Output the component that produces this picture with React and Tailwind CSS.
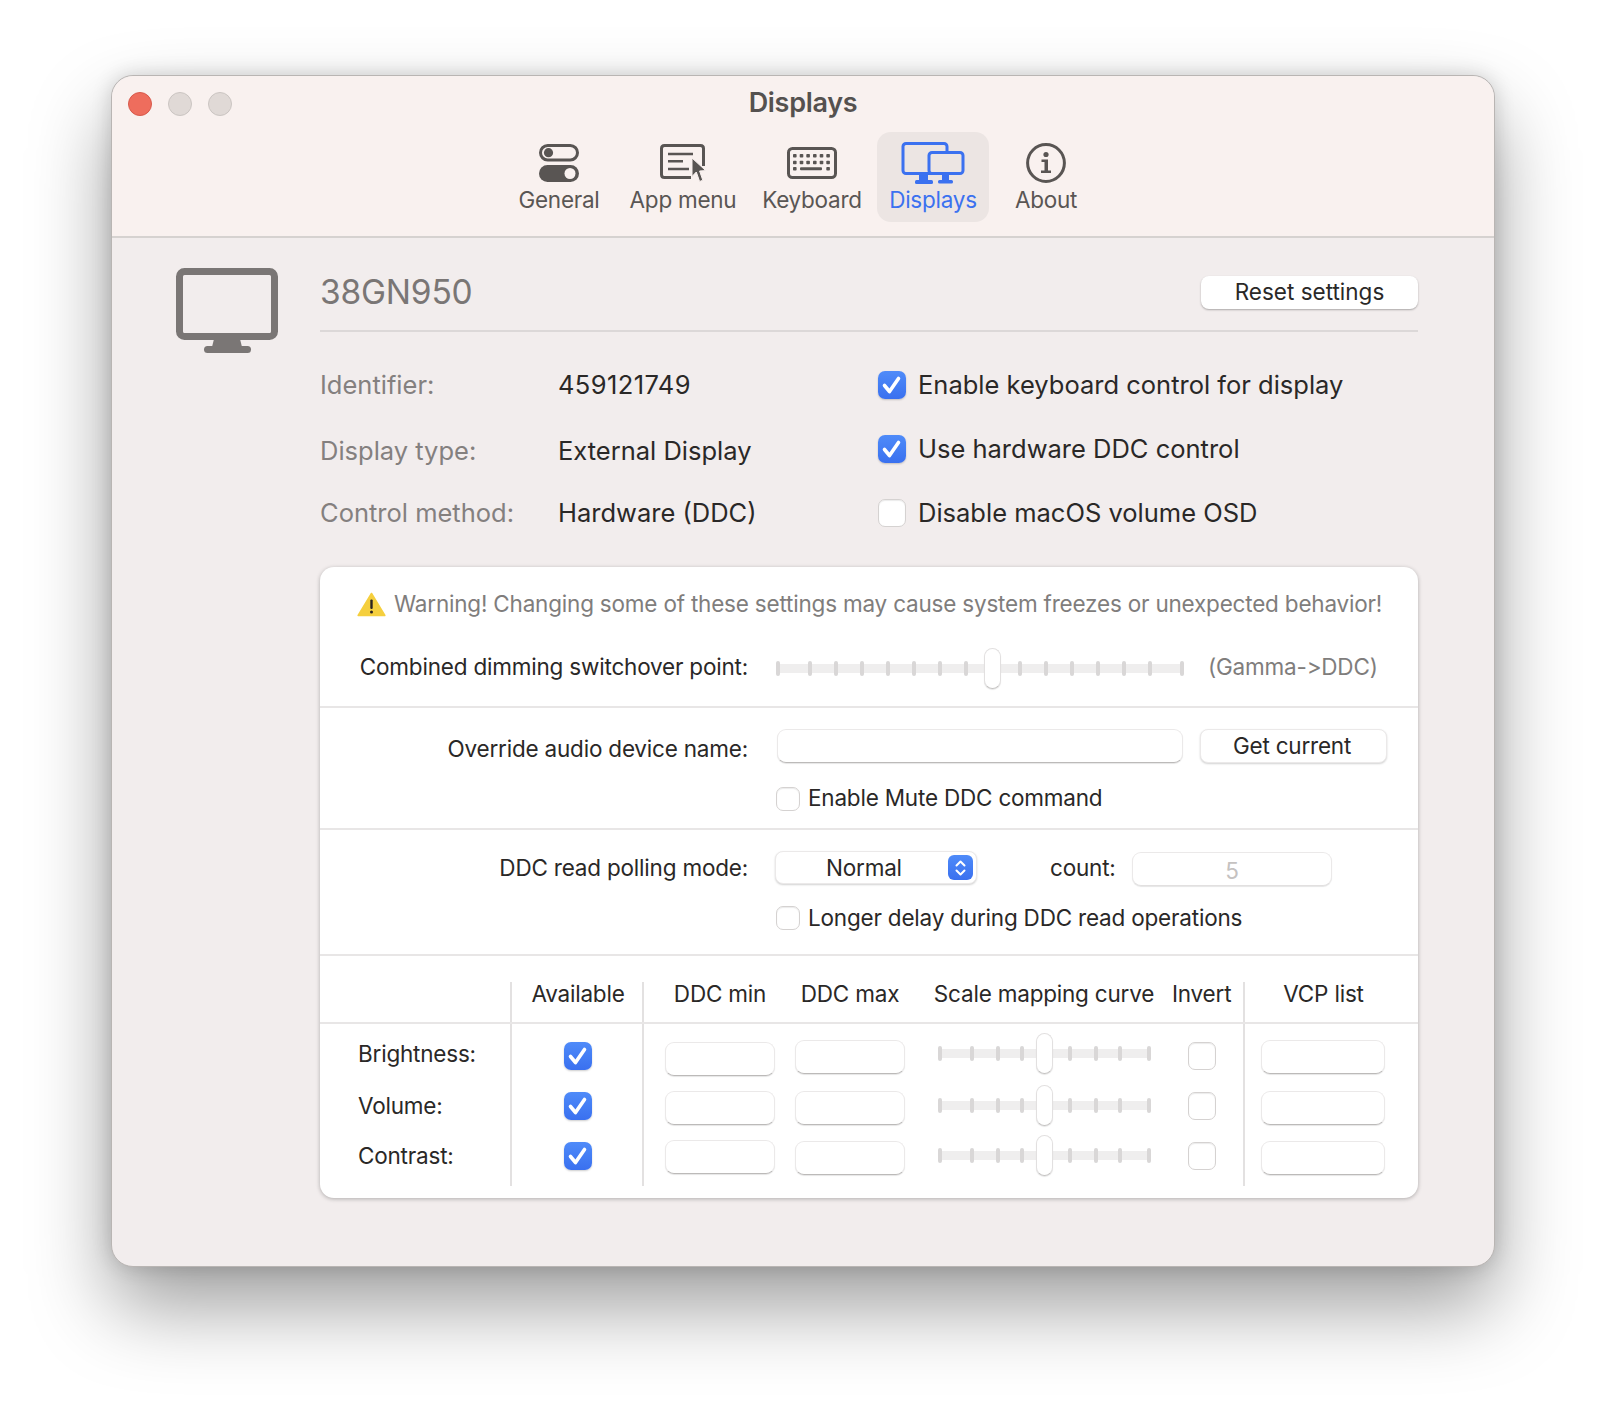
import React from "react";

const mainTicks = [0, 32, 58, 84, 110, 136, 162, 188, 242, 268, 294, 320, 346, 372, 404];
const smallTicks = [0, 32, 58, 82, 130, 156, 180, 209];

function Check({ on, size = "w-[28px] h-[28px]" }) {
  if (!on) {
    return <div className={`${size} shrink-0 rounded-[7px] bg-white border border-[#d5d2d1] shadow-[inset_0_1px_1px_rgba(0,0,0,0.08)]`} />;
  }
  return (
    <div className={`${size} shrink-0 rounded-[7px] bg-gradient-to-b from-[#4f8bf9] to-[#3a70ef] flex items-center justify-center shadow-[0_1px_2px_rgba(0,0,0,0.2)]`}>
      <svg viewBox="0 0 28 28" className="w-full h-full">
        <path d="M6.5 14.5 L11.5 20.5 L20.5 7.5" fill="none" stroke="white" strokeWidth="3.6" strokeLinecap="round" strokeLinejoin="round" />
      </svg>
    </div>
  );
}

function Field({ className = "", children }) {
  return (
    <div className={`bg-white rounded-[9px] border border-[#ebe9e9] border-b-[#bcbab9] shadow-[0_1px_1px_rgba(0,0,0,0.1)] flex items-center justify-center ${className}`}>
      {children}
    </div>
  );
}

function Slider({ ticks, thumb, className = "" }) {
  return (
    <div className={`relative h-[41px] ${className}`}>
      <div className="absolute left-0 right-0 top-[16px] h-[9px] bg-[#efeeee]" />
      {ticks.map((x) => (
        <div key={x} className="absolute top-[13px] w-[4px] h-[15px] rounded-[2px] bg-[#d9d7d7]" style={{ left: x }} />
      ))}
      <div className="absolute top-0 w-[17px] h-[41px] rounded-full bg-white border border-[#e2e0e0] border-b-[#c4c2c1] shadow-[0_1px_1px_rgba(0,0,0,0.1)]" style={{ left: thumb }} />
    </div>
  );
}

function GeneralIcon() {
  return (
    <svg width="40" height="38" viewBox="0 0 40 38">
      <rect x="1.5" y="1.5" width="37" height="14.5" rx="7.2" fill="none" stroke="#595553" strokeWidth="3" />
      <circle cx="9.5" cy="8.7" r="4.6" fill="#595553" />
      <rect x="0" y="21" width="40" height="17" rx="8.5" fill="#595553" />
      <circle cx="31" cy="29.5" r="5.5" fill="#f9f1ef" />
    </svg>
  );
}

function AppMenuIcon() {
  return (
    <svg width="48" height="42" viewBox="0 0 48 42">
      <path d="M32 35.5 H5.5 Q2.5 35.5 2.5 32.5 V6.5 Q2.5 3.5 5.5 3.5 H41.5 Q44.5 3.5 44.5 6.5 V24" fill="none" stroke="#595553" strokeWidth="3" />
      <path d="M9 12 H34 M9 19.3 H24 M9 27 H30" stroke="#595553" strokeWidth="2.6" />
      <path d="M33 16 L33 34.5 L37.3 30 L40.6 39.5 L43.8 38.2 L40.6 29 L46.7 28.6 Z" fill="#595553" stroke="#f9f1ef" strokeWidth="1" />
    </svg>
  );
}

function KeyboardIcon() {
  const cols = [6, 12.7, 19.3, 26, 32.7, 39.3];
  return (
    <svg width="50" height="32" viewBox="0 0 50 32">
      <rect x="1.5" y="1.5" width="47" height="29" rx="4" fill="none" stroke="#595553" strokeWidth="3" />
      {[7, 13.7].map((y) => cols.map((x) => <rect key={`${x}-${y}`} x={x} y={y} width="3.6" height="3.6" rx="0.8" fill="#595553" />))}
      <rect x="6" y="20" width="3.6" height="3.6" rx="0.8" fill="#595553" />
      <rect x="13" y="20.3" width="22" height="3" rx="1" fill="#595553" />
      <rect x="39.3" y="20" width="3.6" height="3.6" rx="0.8" fill="#595553" />
    </svg>
  );
}

function DisplaysIcon() {
  return (
    <svg width="68" height="46" viewBox="0 0 68 46">
      <rect x="4" y="3.5" width="44" height="30" rx="3" fill="none" stroke="#3b71f0" strokeWidth="3" />
      <rect x="30" y="12.5" width="34" height="21" rx="3" fill="#ece5e3" stroke="#3b71f0" strokeWidth="3" />
      <rect x="20" y="35" width="9" height="5" fill="#3b71f0" />
      <rect x="16" y="40" width="18" height="4" rx="1.5" fill="#3b71f0" />
      <rect x="43" y="35" width="7" height="5" fill="#3b71f0" />
      <rect x="39" y="40" width="15" height="3.5" rx="1.5" fill="#3b71f0" />
    </svg>
  );
}

function AboutIcon() {
  return (
    <svg width="40" height="40" viewBox="0 0 40 40">
      <circle cx="20" cy="20" r="18.4" fill="none" stroke="#595553" strokeWidth="3" />
      <circle cx="20" cy="11.5" r="2.6" fill="#595553" />
      <path d="M15.5 16.5 H22 V27.5 H25 V30 H15 V27.5 H18.5 V19 H15.5 Z" fill="#595553" />
    </svg>
  );
}

function MonitorIcon() {
  return (
    <svg width="102" height="85" viewBox="0 0 102 85" className="shrink-0">
      <rect x="3.5" y="3.5" width="95" height="65" rx="5" fill="none" stroke="#7a7675" strokeWidth="7" />
      <path d="M38 71 H64 L66 79 H36 Z" fill="#7a7675" />
      <rect x="28" y="78" width="47" height="7" rx="3.5" fill="#7a7675" />
    </svg>
  );
}

function WarningIcon() {
  return (
    <svg width="29" height="25" viewBox="0 0 29 25" className="shrink-0">
      <path d="M14.5 1.5 L27.8 23.5 H1.2 Z" fill="#f5cf3e" stroke="#f5cf3e" strokeWidth="1.6" strokeLinejoin="round" />
      <rect x="13.3" y="7.5" width="2.4" height="9.5" rx="1" fill="#2b2320" />
      <circle cx="14.5" cy="20" r="1.5" fill="#2b2320" />
    </svg>
  );
}

function Tab({ label, width, active, children }) {
  return (
    <div className={`${width} h-[90px] flex flex-col items-center rounded-[14px] ${active ? "bg-[#ece5e3]" : ""}`}>
      <div className="h-[48px] mt-[7px] flex items-center justify-center">{children}</div>
      <div className={`h-[28px] -mt-[1px] leading-[28px] text-[22.5px] tracking-[-0.25px] ${active ? "text-[#3b71f0]" : "text-[#5a5654]"}`}>{label}</div>
    </div>
  );
}

const tableRows = [
  { name: "Brightness:", rowH: "h-[56px]", labelMt: "mt-[15px]", checkMt: "mt-[18px]", minMt: "mt-[18px]", maxMt: "mt-[16px]", sliderMt: "mt-[9px]" },
  { name: "Volume:", rowH: "h-[50px]", labelMt: "mt-[11px]", checkMt: "mt-[12px]", minMt: "mt-[11px]", maxMt: "mt-[11px]", sliderMt: "mt-[5px]" },
  { name: "Contrast:", rowH: "h-[56px]", labelMt: "mt-[11px]", checkMt: "mt-[12px]", minMt: "mt-[10px]", maxMt: "mt-[11px]", sliderMt: "mt-[5px]" },
];

const colCls = "grid grid-cols-[190px_132px_142px_131px_257px_71px_175px]";

export default function App() {
  return (
    <div className="w-[1606px] h-[1414px] bg-white overflow-hidden pt-[75px] font-['Inter','Liberation_Sans',sans-serif] text-[#2a2827]">
      <div className="mx-auto w-[1384px] h-[1192px] rounded-[22px] border border-[#b9b5b3] bg-[#f2eded] flex flex-col shadow-[0_40px_80px_rgba(0,0,0,0.38),0_0_20px_rgba(0,0,0,0.16)]">
        {/* title bar */}
        <div className="h-[162px] shrink-0 rounded-t-[22px] bg-[#f9f1ef] border-b-2 border-[#d6d2d0]">
          <div className="h-[56px] grid grid-cols-[1fr_auto_1fr] items-center px-[16px]">
            <div className="flex gap-[16px]">
              <div className="w-[24px] h-[24px] rounded-full bg-[#ee6d5d] border border-[#d8594b]" />
              <div className="w-[24px] h-[24px] rounded-full bg-[#e0d9d6] border border-[#cbc5c2]" />
              <div className="w-[24px] h-[24px] rounded-full bg-[#e0d9d6] border border-[#cbc5c2]" />
            </div>
            <div className="text-[27px] font-semibold text-[#55514f] tracking-[-0.3px] -mt-[2px]">Displays</div>
            <div />
          </div>
          <div className="flex ml-[387px]">
            <Tab label="General" width="w-[120px]"><GeneralIcon /></Tab>
            <Tab label="App menu" width="w-[128px]"><AppMenuIcon /></Tab>
            <Tab label="Keyboard" width="w-[130px]"><KeyboardIcon /></Tab>
            <Tab label="Displays" width="w-[112px]" active><DisplaysIcon /></Tab>
            <Tab label="About" width="w-[114px]"><AboutIcon /></Tab>
          </div>
        </div>

        {/* content */}
        <div className="flex pl-[64px] gap-[42px]">
          <div className="pt-[30px]"><MonitorIcon /></div>
          <div className="w-[1098px]">
            <div className="h-[78px] mt-[16px] flex items-center justify-between border-b-2 border-[#dcd8d8]">
              <div className="text-[33.5px] text-[#7a7675] tracking-[-0.2px]">38GN950</div>
              <div className="w-[217px] h-[33px] rounded-[8px] bg-white shadow-[0_1px_2px_rgba(0,0,0,0.3)] flex items-center justify-center text-[22.5px]">Reset settings</div>
            </div>

            <div className="mt-[21px] text-[25.5px] grid grid-cols-[238px_320px_1fr] grid-rows-[64px_64px_64px] items-center">
              <div className="text-[#84807f]">Identifier:</div>
              <div className="tracking-[0.4px]">459121749</div>
              <div className="flex items-center gap-[12px]"><Check on /><span>Enable keyboard control for display</span></div>
              <div className="text-[#84807f] mt-[5px]">Display type:</div>
              <div className="mt-[5px]">External Display</div>
              <div className="flex items-center gap-[12px]"><Check on /><span>Use hardware DDC control</span></div>
              <div className="text-[#84807f]">Control method:</div>
              <div>Hardware (DDC)</div>
              <div className="flex items-center gap-[12px]"><Check /><span>Disable macOS volume OSD</span></div>
            </div>

            {/* settings card */}
            <div className="mt-[22px] h-[631px] rounded-[14px] bg-white shadow-[0_1px_4px_rgba(0,0,0,0.28)] text-[22.5px] tracking-[-0.2px] leading-[30px]">
              <div className="h-[141px] border-b-2 border-[#e8e6e6] pt-[22px]">
                <div className="flex items-center gap-[8px] pl-[37px] h-[30px] text-[#807d7c]">
                  <WarningIcon />
                  <span>Warning! Changing some of these settings may cause system freezes or unexpected behavior!</span>
                </div>
                <div className="flex items-center mt-[27px]">
                  <div className="w-[428px] text-right -mt-[2px]">Combined dimming switchover point:</div>
                  <Slider ticks={mainTicks} thumb={208} className="ml-[28px] mt-[2px] w-[408px]" />
                  <div className="ml-[24px] -mt-[2px] text-[#807d7c]">(Gamma-&gt;DDC)</div>
                </div>
              </div>

              <div className="h-[122px] border-b-2 border-[#e8e6e6] pt-[21px]">
                <div className="flex items-start">
                  <div className="w-[428px] text-right mt-[5px]">Override audio device name:</div>
                  <Field className="ml-[29px] w-[406px] h-[34px]" />
                  <div className="ml-[17px] w-[187px] h-[34px] rounded-[8px] bg-white border border-[#ebe9e9] shadow-[0_1px_2px_rgba(0,0,0,0.18)] flex items-center justify-center pr-[3px]">Get current</div>
                </div>
                <div className="flex items-center gap-[8px] ml-[456px] mt-[23px] h-[24px]">
                  <Check size="w-[24px] h-[24px]" />
                  <span className="-mt-[2px]">Enable Mute DDC command</span>
                </div>
              </div>

              <div className="h-[126px] border-b-2 border-[#e8e6e6] pt-[21px]">
                <div className="flex items-center h-[33px]">
                  <div className="w-[428px] text-right">DDC read polling mode:</div>
                  <div className="relative ml-[27px] w-[202px] h-[33px] rounded-[8px] bg-white border border-[#ebe9e9] shadow-[0_1px_2px_rgba(0,0,0,0.18)] flex items-center pl-[50px]">
                    <span>Normal</span>
                    <div className="absolute right-[3px] top-[3px] w-[25px] h-[25px] rounded-[6px] bg-gradient-to-b from-[#4f8bf9] to-[#3a70ef] flex items-center justify-center">
                      <svg width="13" height="18" viewBox="0 0 13 18">
                        <path d="M2.5 6.5 L6.5 2.5 L10.5 6.5 M2.5 11.5 L6.5 15.5 L10.5 11.5" fill="none" stroke="white" strokeWidth="2" strokeLinecap="round" strokeLinejoin="round" />
                      </svg>
                    </div>
                  </div>
                  <div className="ml-[73px] w-[82px]">count:</div>
                  <Field className="w-[200px] h-[34px] mt-[3px] !border-b-[#e2e0e0] text-[#c5c2c1] pt-[3px]">5</Field>
                </div>
                <div className="flex items-center gap-[8px] ml-[456px] mt-[22px] h-[24px]">
                  <Check size="w-[24px] h-[24px]" />
                  <span>Longer delay during DDC read operations</span>
                </div>
              </div>

              {/* table */}
              <div className="pt-[26px]">
                <div className={`${colCls} h-[42px] leading-[24px] border-b-2 border-[#e8e6e6]`}>
                  <div />
                  <div className="border-l-2 border-[#e3e1e1] pl-[2px] text-center">Available</div>
                  <div className="border-l-2 border-[#e3e1e1] pl-[21px]"><div className="w-[110px] text-center">DDC min</div></div>
                  <div className="pl-[11px]"><div className="w-[110px] text-center">DDC max</div></div>
                  <div className="pl-[23px]"><div className="w-[212px] flex justify-center whitespace-nowrap">Scale mapping curve</div></div>
                  <div className="pr-[12px] text-center">Invert</div>
                  <div className="border-l-2 border-[#e3e1e1] pl-[17px]"><div className="w-[123px] text-center">VCP list</div></div>
                </div>
                {tableRows.map((r) => (
                  <div key={r.name} className={`${colCls} ${r.rowH}`}>
                    <div className={`pl-[38px] ${r.labelMt}`}>{r.name}</div>
                    <div className="border-l-2 border-[#e3e1e1] pl-[2px] flex justify-center"><Check on size={`w-[28px] h-[28px] ${r.checkMt}`} /></div>
                    <div className="border-l-2 border-[#e3e1e1] pl-[21px]"><Field className={`w-[110px] h-[34px] ${r.minMt}`} /></div>
                    <div className="pl-[11px]"><Field className={`w-[110px] h-[34px] ${r.maxMt}`} /></div>
                    <div className="pl-[23px]"><Slider ticks={smallTicks} thumb={98} className={`w-[213px] ${r.sliderMt}`} /></div>
                    <div className="pl-[16px]"><Check size={`w-[28px] h-[28px] ${r.checkMt}`} /></div>
                    <div className="border-l-2 border-[#e3e1e1] pl-[16px]"><Field className={`w-[124px] h-[34px] ${r.maxMt}`} /></div>
                  </div>
                ))}
              </div>
            </div>
          </div>
        </div>
      </div>
    </div>
  );
}
